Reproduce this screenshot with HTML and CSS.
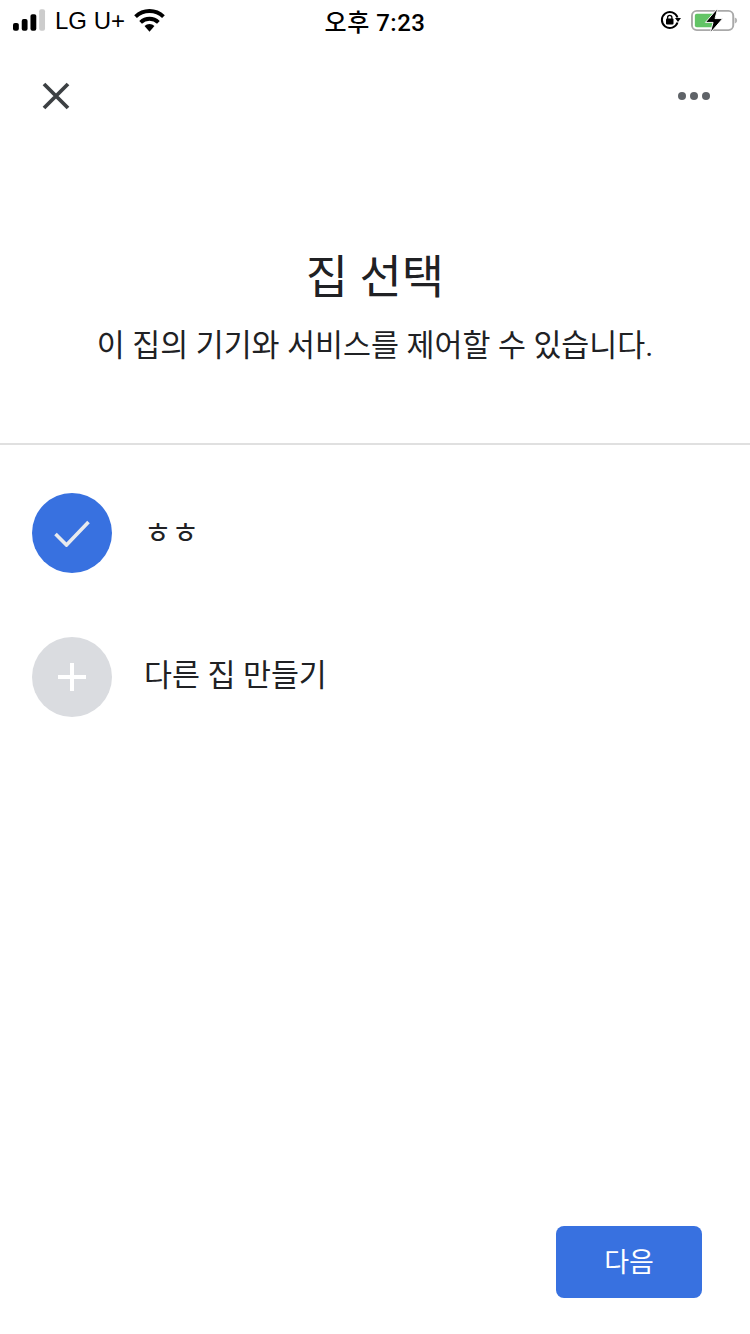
FILE: index.html
```html
<!DOCTYPE html>
<html lang="ko">
<head>
    <meta charset="UTF-8">
    <meta name="viewport" content="width=device-width, initial-scale=1">
    <link rel="stylesheet" href="styles.css">
    <title>집 선택</title>
</head>
<body>
<div class="screen">
    <div class="statusbar">
        <div class="status-left">
            <svg class="signal" viewBox="0 0 34 22">
                <rect x="0" y="14" width="6" height="8" rx="2" fill="#000"/>
                <rect x="9" y="10" width="6" height="12" rx="2" fill="#000"/>
                <rect x="18" y="5" width="6" height="17" rx="2" fill="#000"/>
                <rect x="27" y="0" width="6" height="22" rx="2" fill="#ccc"/>
            </svg>
            <span class="carrier">LG U+</span>
            <svg class="wifi" viewBox="0 0 30 22">
                <path d="M15 22l-4.800-5.600a7 7 0 0 1 9.600 0z" fill="#000"/>
                <path d="M6.400 12.800a12.500 12.500 0 0 1 17.200 0" fill="none" stroke="#000" stroke-width="3.800"/>
                <path d="M1.500 7.300a19.500 19.500 0 0 1 27 0" fill="none" stroke="#000" stroke-width="3.800"/>
            </svg>
        </div>
        <div class="status-time">오후 7:23</div>
        <div class="status-right">
            <svg class="lock" viewBox="0 0 22 20">
                <path d="M17.500 12.500a8 8 0 1 1 0-5" fill="none" stroke="#000" stroke-width="2"/>
                <path d="M15 8h6l-3 4z" fill="#000"/>
                <rect x="6" y="8.500" width="7.500" height="6" rx="1" fill="#000"/>
                <path d="M7.600 9V7.500a2.150 2.150 0 0 1 4.300 0V9" fill="none" stroke="#000" stroke-width="1.300"/>
            </svg>
            <svg class="battery" viewBox="0 0 50 26">
                <rect x="1" y="3" width="43" height="20" rx="5" fill="none" stroke="#a9a9a9" stroke-width="2"/>
                <rect x="4" y="6" width="22" height="14" rx="2" fill="#62c466"/>
                <path d="M45.500 10v6c1.800-.4 2.500-1.500 2.500-3s-.7-2.600-2.500-3z" fill="#b5b5b5"/>
                <path d="M28 0L15 15h8l-3 11 13-15h-8z" fill="#000" stroke="#fff" stroke-width="1"/>
            </svg>
        </div>
    </div>

    <div class="toolbar">
        <svg class="close" viewBox="0 0 28 28">
            <path d="M2 2L26 26M26 2L2 26" fill="none" stroke="#3c4043" stroke-width="3.800"/>
        </svg>
        <div class="more"><i></i><i></i><i></i></div>
    </div>

    <div class="header">
        <h1>집 선택</h1>
        <p>이 집의 기기와 서비스를 제어할 수 있습니다.</p>
    </div>

    <div class="list">
        <div class="row">
            <div class="circle circle-on">
                <svg viewBox="0 0 36 28">
                    <path d="M1.500 15L12.500 26L34.500 3" fill="none" stroke="#e8eaed" stroke-width="3.600"/>
                </svg>
            </div>
            <span class="row-small">ㅎㅎ</span>
        </div>
        <div class="row">
            <div class="circle circle-add">
                <svg viewBox="0 0 28 28">
                    <path d="M14 0V28M0 14H28" fill="none" stroke="#fff" stroke-width="4"/>
                </svg>
            </div>
            <span class="row-text">다른 집 만들기</span>
        </div>
    </div>

    <div class="footer">
        <button class="nextbtn">다음</button>
    </div>
</div>
</body>
</html>
```

FILE: styles.css
```css
* {
    box-sizing: border-box;
}

html, body {
    margin: 0;
    padding: 0;
    background: #fff;
}

.screen {
    width: 750px;
    height: 1334px;
    display: flex;
    flex-direction: column;
    font-family: "Roboto", "Noto Sans CJK KR", sans-serif;
    color: #202124;
    overflow: hidden;
}

.statusbar {
    height: 40px;
    padding: 0 13px;
    display: grid;
    grid-template-columns: 1fr auto 1fr;
    align-items: center;
    color: #000;
}

.status-left, .status-right {
    display: flex;
    align-items: center;
}

.status-right {
    justify-content: flex-end;
}

.signal {
    width: 33px;
    height: 22px;
    margin-right: 9px;
}

.carrier {
    font: 24px "Liberation Sans", "Noto Sans CJK KR", sans-serif;
    margin-right: 9px;
    padding-top: 2px;
}

.wifi {
    width: 31px;
    height: 23px;
}

.status-time {
    font: 500 24px "Roboto", "Noto Sans CJK KR", sans-serif;
    letter-spacing: 0.5px;
}

.lock {
    width: 22px;
    height: 20px;
    margin-right: 9px;
}

.battery {
    width: 48px;
    height: 25px;
    margin-right: -2px;
}

.toolbar {
    height: 112px;
    padding: 0 40px 0 42px;
    display: flex;
    justify-content: space-between;
    align-items: center;
}

.close {
    width: 28px;
    height: 28px;
}

.more {
    display: flex;
    gap: 4px;
}

.more i {
    width: 8px;
    height: 8px;
    border-radius: 50%;
    background: #5f6368;
}

.header {
    height: 293px;
    padding-top: 97px;
    text-align: center;
    border-bottom: 2px solid #e0e0e0;
}

.header h1 {
    margin: 0;
    font-size: 46px;
    font-weight: 400;
    line-height: 56px;
}

.header p {
    margin: 20px 0 0;
    font-size: 30.4px;
    line-height: 42px;
}

.list {
    padding: 48px 32px 0;
    display: flex;
    flex-direction: column;
    gap: 64px;
}

.row {
    display: flex;
    align-items: center;
    gap: 32px;
}

.circle {
    width: 80px;
    height: 80px;
    border-radius: 50%;
    display: flex;
    align-items: center;
    justify-content: center;
}

.circle-on {
    background: #3871e0;
}

.circle-on svg {
    width: 36px;
    height: 28px;
}

.circle-add {
    background: #dadce0;
}

.circle-add svg {
    width: 28px;
    height: 28px;
}

.row-small {
    font-size: 30px;
    line-height: 40px;
}

.row-text {
    font-size: 30.4px;
    line-height: 40px;
    margin-bottom: 2px;
}

.footer {
    margin-top: auto;
    padding: 0 48px 36px 0;
    display: flex;
    justify-content: flex-end;
}

.nextbtn {
    width: 146px;
    height: 72px;
    border: 0;
    border-radius: 8px;
    background: #3871e0;
    color: #fff;
    font: 27px "Roboto", "Noto Sans CJK KR", sans-serif;
    padding-bottom: 5px;
}
```
